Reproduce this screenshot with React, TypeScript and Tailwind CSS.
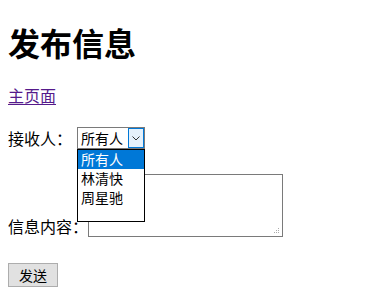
export default function App() {
  return (
    <div className="p-2 min-h-[288px] bg-white text-black font-['Noto_Sans_CJK_SC','Microsoft_YaHei',sans-serif] text-[16px]">
      {/* Title */}
      <h1 className="mt-[14px] text-[32px] leading-[40px] font-bold">发布信息</h1>

      {/* Home link */}
      <p className="mt-[23px] leading-[20px]">
        <a href="#" className="text-[#551a8b] underline underline-offset-2">主页面</a>
      </p>

      {/* Receiver */}
      <div className="mt-[22px] flex items-center h-[22px]">
        <span className="leading-[20px]">接收人：</span>
        <div className="relative ml-[5px]">
          <div className="flex items-center w-[68px] h-[22px] border border-[#7a7a7a] bg-white">
            <span className="flex-1 pl-[3px] text-[14px] leading-[20px]">所有人</span>
            <span className="w-[16px] h-[20px] border border-[#0078d7] bg-[#e5f1fb] flex items-center justify-center">
              <svg width="8" height="5" viewBox="0 0 8 5" fill="none" stroke="#333" strokeWidth="1">
                <path d="M0.5 0.5 L4 4 L7.5 0.5" />
              </svg>
            </span>
          </div>
          {/* Open option list */}
          <ul className="absolute left-0 top-[22px] z-10 w-[68px] h-[73px] border border-black bg-white text-[14px] leading-[19px]">
            <li className="bg-[#0078d7] text-white pl-[3px]">所有人</li>
            <li className="pl-[3px]">林清快</li>
            <li className="pl-[3px]">周星驰</li>
          </ul>
        </div>
      </div>

      {/* Content */}
      <div className="mt-[25px] flex items-end">
        <span className="leading-[20px] mb-[1px]">信息内容：</span>
        <div className="relative w-[195px] h-[63px] border border-[#7a7a7a] bg-white">
          <textarea className="w-full h-full resize-none outline-none bg-transparent" />
          <svg className="absolute right-[2px] bottom-[2px]" width="7" height="7" viewBox="0 0 7 7" fill="#aaa">
            <rect x="5" y="1" width="1" height="1" />
            <rect x="3" y="3" width="1" height="1" />
            <rect x="5" y="3" width="1" height="1" />
            <rect x="1" y="5" width="1" height="1" />
            <rect x="3" y="5" width="1" height="1" />
            <rect x="5" y="5" width="1" height="1" />
          </svg>
        </div>
      </div>

      {/* Send */}
      <div className="mt-[25px]">
        <button className="w-[50px] h-[24px] border border-[#adadad] bg-[#e1e1e1] text-[14px] leading-[20px]">发送</button>
      </div>
    </div>
  );
}
